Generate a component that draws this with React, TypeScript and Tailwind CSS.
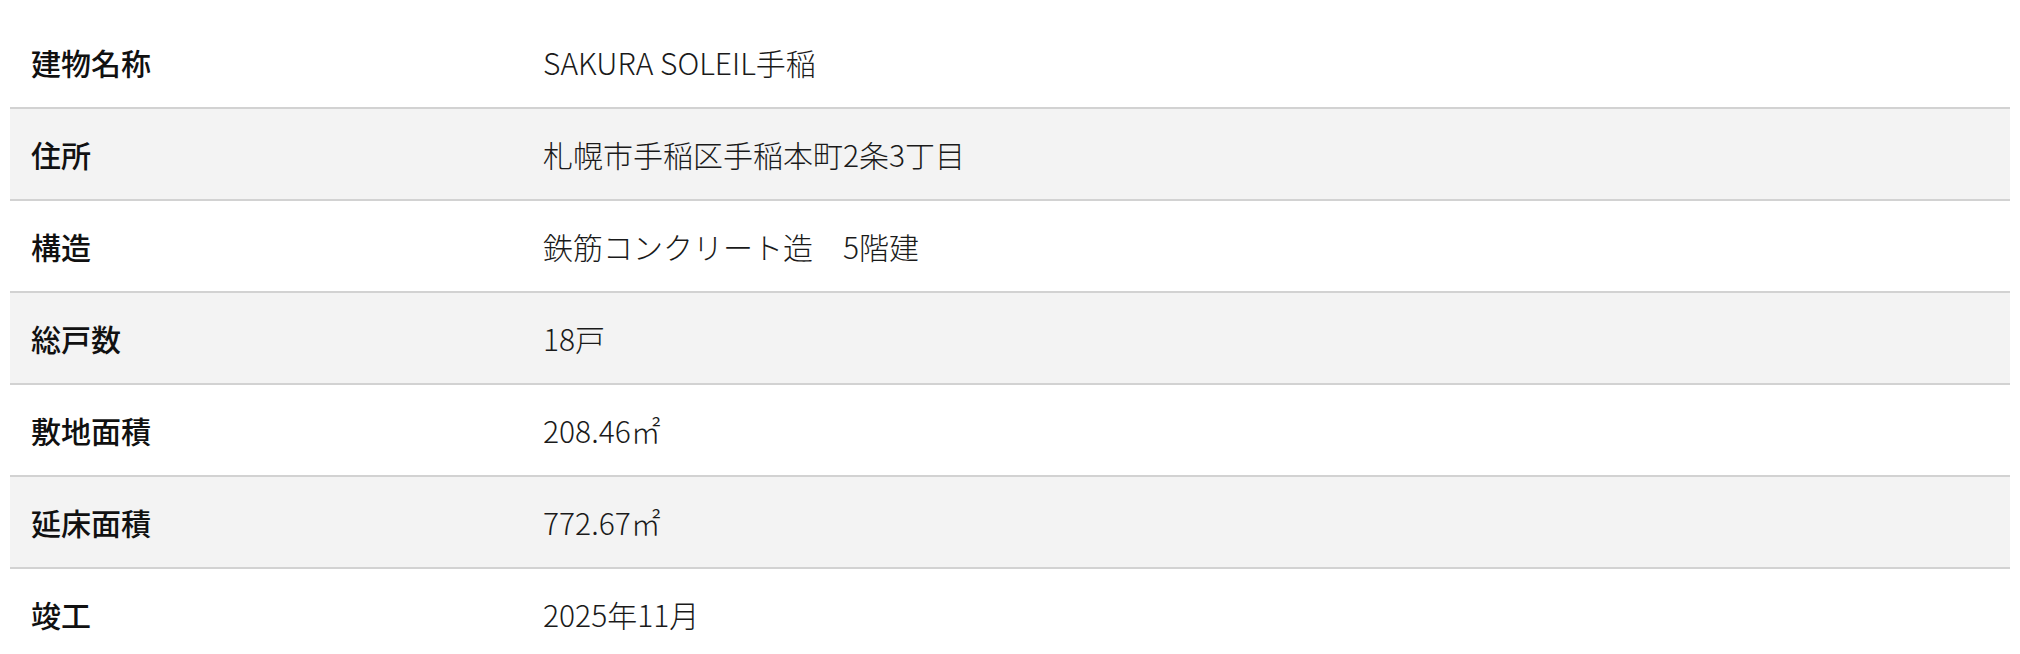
import React from "react";

interface SpecRow {
  label: string;
  value: string;
}

const rows: SpecRow[] = [
  { label: "建物名称", value: "SAKURA SOLEIL手稲" },
  { label: "住所", value: "札幌市手稲区手稲本町2条3丁目" },
  { label: "構造", value: "鉄筋コンクリート造　5階建" },
  { label: "総戸数", value: "18戸" },
  { label: "敷地面積", value: "208.46㎡" },
  { label: "延床面積", value: "772.67㎡" },
  { label: "竣工", value: "2025年11月" },
];

const App: React.FC = () => {
  return (
    <div className="bg-white px-[10px] pt-[17px] font-['Noto_Sans_CJK_JP',sans-serif]">
      <dl className="flex flex-col">
        {rows.map((row, index) => (
          <div
            key={row.label}
            className={
              "grid grid-cols-[533px_1fr] items-center h-[92px] border-b-2 border-[#d2d2d2] " +
              (index % 2 === 1 ? "bg-[#f3f3f3]" : "bg-white")
            }
          >
            <dt className="pl-[21px] text-[30px] font-medium text-[#111]">
              {row.label}
            </dt>
            <dd className="text-[30px] font-light text-[#1a1a1a]">
              {row.value}
            </dd>
          </div>
        ))}
      </dl>
    </div>
  );
};

export default App;
